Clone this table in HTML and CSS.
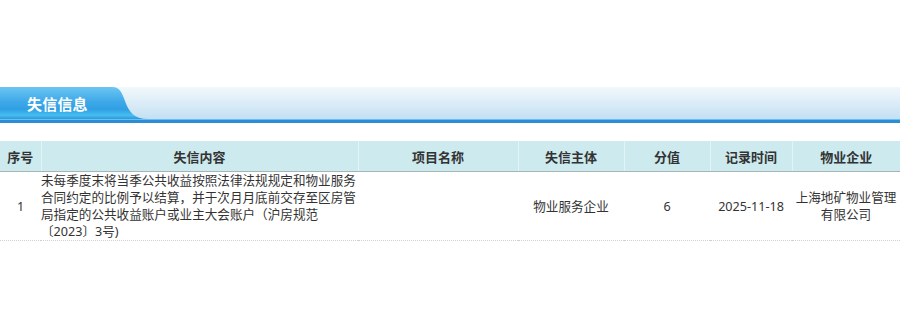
FILE: index.html
```html
<!DOCTYPE html>
<html lang="zh">
<head>
<meta charset="utf-8">
<link rel="stylesheet" href="styles.css">
</head>
<body>
<div class="page">
  <div class="titlebar">
    <div class="tab"><span class="tab-text">失信信息</span></div>
    <div class="bar-rest"></div>
  </div>
  <div class="titleline"></div>
  <table class="grid">
    <colgroup>
      <col class="c1"><col class="c2"><col class="c3"><col class="c4"><col class="c5"><col class="c6"><col class="c7">
    </colgroup>
    <thead>
      <tr>
        <th>序号</th>
        <th>失信内容</th>
        <th>项目名称</th>
        <th>失信主体</th>
        <th>分值</th>
        <th>记录时间</th>
        <th>物业企业</th>
      </tr>
    </thead>
    <tbody>
      <tr>
        <td>1</td>
        <td class="content">未每季度末将当季公共收益按照法律法规规定和物业服务合同约定的比例予以结算，并于次月月底前交存至区房管局指定的公共收益账户或业主大会账户（沪房规范〔2023〕3号)</td>
        <td></td>
        <td>物业服务企业</td>
        <td>6</td>
        <td>2025-11-18</td>
        <td>上海地矿物业管理有限公司</td>
      </tr>
    </tbody>
  </table>
</div>
</body>
</html>
```

FILE: styles.css
```css
html, body {
  margin: 0;
  padding: 0;
  background: #ffffff;
}
body {
  font-family: "Noto Sans", "Noto Sans CJK SC", "Microsoft YaHei", sans-serif;
  color: #333333;
}
.page {
  padding-top: 87px;
  width: 900px;
}
.titlebar {
  display: flex;
  height: 32px;
  background: linear-gradient(#f2f8fb, #c4e0f3);
}
.tab {
  width: 150px;
  flex: none;
  display: flex;
  align-items: center;
  background: linear-gradient(#6cc5f3 0%, #3fa9e8 45%, #2f9fe4 70%, #47bdf0 88%, #2d98de 100%);
  clip-path: path('M0 0 H112 C120 0 122 6 125 14 C129 25 134 32 148 32 H0 Z');
}
.tab-text {
  margin-left: 27px;
  margin-top: 1px;
  color: #ffffff;
  font-family: "Noto Sans CJK SC", sans-serif;
  font-size: 15px;
  font-weight: bold;
  letter-spacing: 0.2px;
}
.bar-rest {
  flex: 1;
}
.titleline {
  height: 4px;
  background: linear-gradient(#6cbdf0 0px, #6cbdf0 1px, #2b8dd4 1px, #2b8dd4 4px);
}
.grid {
  margin-top: 18px;
  width: 900px;
  border-collapse: collapse;
  table-layout: fixed;
  font-size: 12.6px;
}
.c1 { width: 41px; }
.c2 { width: 317px; }
.c3 { width: 160px; }
.c4 { width: 106px; }
.c5 { width: 86px; }
.c6 { width: 82px; }
.c7 { width: 108px; }
.grid th {
  height: 30px;
  padding: 0;
  background: #cdeaef;
  border-left: 1px solid #e4f3f6;
  border-bottom: 1px solid #a9b4b7;
  font-weight: bold;
  font-size: 13px;
  color: #333333;
  text-align: center;
}
.grid th:first-child {
  border-left: none;
}
.grid td {
  padding: 0 2px;
  line-height: 17px;
  height: 68px;
  text-align: center;
  vertical-align: middle;
  border-bottom: 1px dotted #cfcfcf;
}
.grid td.content {
  padding: 0;
  text-align: left;
}
```
